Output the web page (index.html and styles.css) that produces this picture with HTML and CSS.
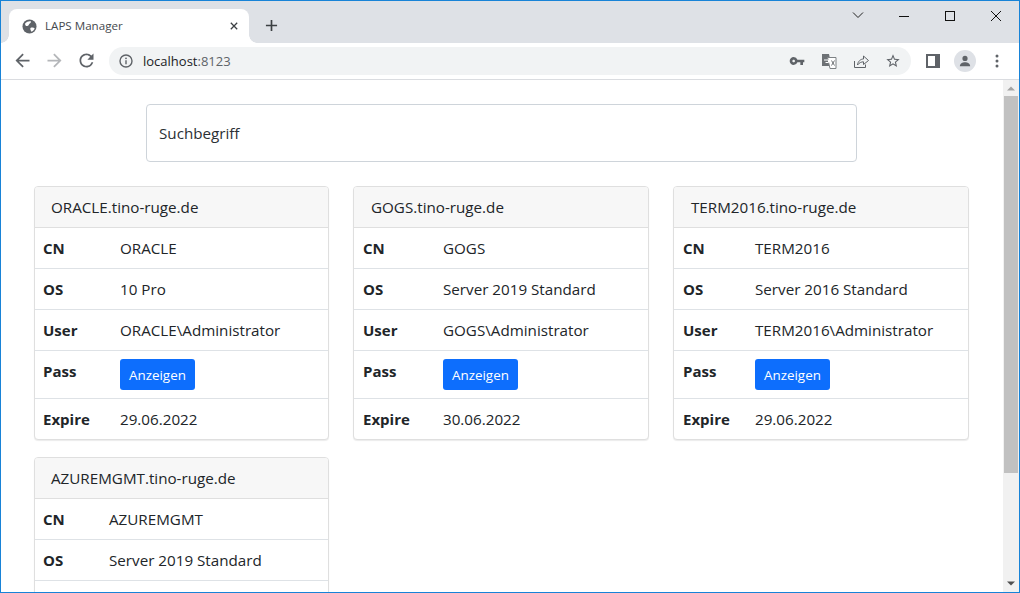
FILE: index.html
```html
<!DOCTYPE html>
<html lang="en">
<head>
  <meta charset="UTF-8" />
  <meta name="viewport" content="width=device-width, initial-scale=1.0" />
  <title>LAPS Manager</title>
  <link rel="stylesheet" href="styles.css">
</head>
<body>
  <div class="window">
    <div class="tabstrip">
      <div class="tab">
        <svg class="favicon" viewBox="0 0 16 16"><circle cx="8" cy="8" r="7.500" fill="#5f6368"/><path d="M3.500 4.500C5 2.800 7.500 2 9.500 2.500 9.800 4 8.500 5 7.500 5.500 7 7 6 7.500 4.500 7.500 3.500 7 3 5.500 3.500 4.500Z M9 9.500C10.500 8.800 12.500 9 13.500 9.800 13 11.500 11.500 13 10 13.500 9.500 12 8.500 11 9 9.500Z" fill="#fff"/></svg>
        <span class="tab-title">LAPS Manager</span>
        <svg class="tab-close" viewBox="0 0 10 10"><path d="M1 1 9 9M9 1 1 9" stroke="#3c4043" stroke-width="1.600"/></svg>
      </div>
      <svg class="new-tab" viewBox="0 0 14 14"><path d="M7 1v12M1 7h12" stroke="#3c4043" stroke-width="1.800"/></svg>
      <div class="window-controls">
        <svg class="win-btn" viewBox="0 0 46 30"><path d="M18 11.500 23 16.500 28 11.500" fill="none" stroke="#222" stroke-width="1"/></svg>
        <svg class="win-btn" viewBox="0 0 46 30"><path d="M18 15.500h10" stroke="#111" stroke-width="1"/></svg>
        <svg class="win-btn" viewBox="0 0 46 30"><rect x="18.500" y="10.500" width="9" height="9" fill="none" stroke="#111" stroke-width="1"/></svg>
        <svg class="win-btn" viewBox="0 0 46 30"><path d="M18 10 28 20M28 10 18 20" stroke="#111" stroke-width="1"/></svg>
      </div>
    </div>

    <div class="toolbar">
      <svg class="nav-icon" viewBox="0 0 24 24"><path fill="#5f6368" d="M20 11H7.830l5.590-5.590L12 4l-8 8 8 8 1.410-1.410L7.830 13H20v-2z"/></svg>
      <svg class="nav-icon" viewBox="0 0 24 24"><path fill="#b4b6b9" d="M4 11h12.170l-5.590-5.590L12 4l8 8-8 8-1.410-1.410L16.170 13H4v-2z"/></svg>
      <svg class="nav-icon" viewBox="0 0 24 24"><path fill="#5f6368" d="M17.650 6.350A7.958 7.958 0 0 0 12 4c-4.420 0-7.990 3.580-7.990 8s3.570 8 7.990 8c3.730 0 6.840-2.550 7.730-6h-2.080A5.990 5.990 0 0 1 12 18c-3.310 0-6-2.690-6-6s2.690-6 6-6c1.660 0 3.140.69 4.220 1.780L13 11h7V4l-2.350 2.350z"/></svg>
      <div class="omnibox">
        <svg class="info-icon" viewBox="0 0 14 14"><circle cx="7" cy="7" r="6" fill="none" stroke="#5f6368" stroke-width="1.400"/><path d="M7 6.200v4" stroke="#5f6368" stroke-width="1.400"/><circle cx="7" cy="4.300" r=".9" fill="#5f6368"/></svg>
        <span class="url">localhost<span class="url-port">:8123</span></span>
        <div class="omni-actions">
          <svg class="omni-icon" viewBox="0 0 24 24"><path fill="#5f6368" d="M12.650 10A5.990 5.990 0 0 0 7 6c-3.310 0-6 2.690-6 6s2.690 6 6 6a5.990 5.990 0 0 0 5.650-4H17v4h4v-4h2v-4H12.650zM7 14c-1.100 0-2-.9-2-2s.9-2 2-2 2 .9 2 2-.9 2-2 2z"/></svg>
          <svg class="omni-icon" viewBox="0 0 16 16"><path fill="#6d7175" d="M1 1h7l2.500 12H1z"/><path d="M6.500 4.500h8.500v11H9z" fill="#fff" stroke="#7d8184" stroke-width="1"/><path d="M3 7h4.500v2.500H4.500" fill="none" stroke="#fff" stroke-width="1"/><path d="M10.500 7.500l3 5M13.500 7.500l-3 5" stroke="#6d7175" stroke-width="1"/></svg>
          <svg class="omni-icon" viewBox="0 0 16 16"><path d="M1.500 8v6.500h11V11.500" fill="none" stroke="#5f6368" stroke-width="1"/><path d="M4.500 12C4.800 8.500 7.500 6 10.500 6V3L15.500 7.500 10.500 11.500V8.800C8.500 8.800 6 9.800 4.500 12Z" fill="#f1f3f4" stroke="#5f6368" stroke-width="1" stroke-linejoin="round"/></svg>
          <svg class="omni-icon" viewBox="0 0 24 24"><path fill="#5f6368" d="M22 9.240l-7.190-.62L12 2 9.190 8.630 2 9.240l5.460 4.730L5.820 21 12 17.270 18.180 21l-1.630-7.030L22 9.240zM12 15.400l-3.760 2.270 1-4.280-3.320-2.880 4.380-.38L12 6.100l1.710 4.040 4.380.38-3.320 2.880 1 4.280L12 15.400z"/></svg>
        </div>
      </div>
      <svg class="panel-icon" viewBox="0 0 14 14"><path fill="#5f6368" d="M0 0h14v14H0z"/><path fill="#fff" d="M2 2h7v10H2z"/></svg>
      <div class="avatar"><svg viewBox="0 0 14 14"><circle cx="7" cy="4" r="3" fill="#5f6368"/><path d="M1 13c0-3 3-4.500 6-4.500s6 1.500 6 4.500z" fill="#5f6368"/></svg></div>
      <svg class="menu-icon" viewBox="0 0 4 14"><circle cx="2" cy="2" r="1.500" fill="#5f6368"/><circle cx="2" cy="7" r="1.500" fill="#5f6368"/><circle cx="2" cy="12" r="1.500" fill="#5f6368"/></svg>
    </div>

    <div class="viewport">
      <main class="page">
        <input class="search" type="text" placeholder="Suchbegriff" />
        <div class="cards">

          <section class="card card-oracle">
            <div class="card-header">ORACLE.tino-ruge.de</div>
            <table class="info">
              <tr><th>CN</th><td>ORACLE</td></tr>
              <tr><th>OS</th><td>10 Pro</td></tr>
              <tr><th>User</th><td>ORACLE\Administrator</td></tr>
              <tr><th>Pass</th><td><button class="btn">Anzeigen</button></td></tr>
              <tr><th>Expire</th><td>29.06.2022</td></tr>
            </table>
          </section>

          <section class="card card-gogs">
            <div class="card-header">GOGS.tino-ruge.de</div>
            <table class="info">
              <tr><th>CN</th><td>GOGS</td></tr>
              <tr><th>OS</th><td>Server 2019 Standard</td></tr>
              <tr><th>User</th><td>GOGS\Administrator</td></tr>
              <tr><th>Pass</th><td><button class="btn">Anzeigen</button></td></tr>
              <tr><th>Expire</th><td>30.06.2022</td></tr>
            </table>
          </section>

          <section class="card card-term">
            <div class="card-header">TERM2016.tino-ruge.de</div>
            <table class="info">
              <tr><th>CN</th><td>TERM2016</td></tr>
              <tr><th>OS</th><td>Server 2016 Standard</td></tr>
              <tr><th>User</th><td>TERM2016\Administrator</td></tr>
              <tr><th>Pass</th><td><button class="btn">Anzeigen</button></td></tr>
              <tr><th>Expire</th><td>29.06.2022</td></tr>
            </table>
          </section>

          <section class="card card-azure">
            <div class="card-header">AZUREMGMT.tino-ruge.de</div>
            <table class="info">
              <tr><th>CN</th><td>AZUREMGMT</td></tr>
              <tr><th>OS</th><td>Server 2019 Standard</td></tr>
              <tr class="row-cut"><th></th><td></td></tr>
            </table>
          </section>

        </div>
      </main>
      <div class="scrollbar">
        <svg class="scroll-arrow" viewBox="0 0 16 16"><path d="M4 10.500 8 6.500 12 10.500Z" fill="#a3a3a3"/></svg>
        <div class="scroll-track"><div class="scroll-thumb"></div></div>
        <svg class="scroll-arrow" viewBox="0 0 16 16"><path d="M4 5.500 8 9.500 12 5.500Z" fill="#505050"/></svg>
      </div>
    </div>
  </div>
</body>
</html>
```

FILE: styles.css
```css
* {
  box-sizing: border-box;
}
html, body {
  margin: 0;
  padding: 0;
  height: 100%;
  overflow: hidden;
}
body {
  font-family: 'Open Sans', sans-serif;
  font-size: 15.200px;
  color: #212529;
  background: #fff;
}
svg {
  display: block;
  flex: none;
}

/* browser frame */
.window {
  height: 593px;
  display: flex;
  flex-direction: column;
  border: 1px solid #1883d7;
}
.tabstrip {
  height: 42px;
  flex: none;
  display: flex;
  align-items: flex-end;
  background: #dee1e6;
  padding-left: 8px;
}
.tab {
  position: relative;
  width: 240px;
  height: 34px;
  display: flex;
  align-items: center;
  padding: 0 11px 0 13px;
  background: #fff;
  border-radius: 8px 8px 0 0;
}
.tab::before,
.tab::after {
  content: "";
  position: absolute;
  bottom: 0;
  width: 8px;
  height: 8px;
}
.tab::before {
  left: -8px;
  background: radial-gradient(circle at 0 0, #dee1e6 7.500px, #fff 8px);
}
.tab::after {
  right: -8px;
  background: radial-gradient(circle at 100% 0, #dee1e6 7.500px, #fff 8px);
}
.favicon {
  width: 15px;
  height: 15px;
}
.tab-title {
  margin: 0 0 2px 8px;
  flex: 1;
  font-size: 11.600px;
  color: #45494e;
}
.tab-close {
  width: 8px;
  height: 8px;
}
.new-tab {
  width: 13px;
  height: 13px;
  margin: 0 0 11px 16px;
}
.window-controls {
  margin-left: auto;
  align-self: flex-start;
  display: flex;
}
.win-btn {
  width: 46px;
  height: 30px;
}

.toolbar {
  height: 37px;
  flex: none;
  display: flex;
  align-items: center;
  background: #fff;
  border-bottom: 1px solid #dadce0;
  padding: 0 17px 1px 11px;
}
.nav-icon {
  width: 21px;
  height: 21px;
  margin-right: 11px;
}
.omnibox {
  width: 802px;
  height: 28px;
  margin-left: 1px;
  display: flex;
  align-items: center;
  padding: 0 10px;
  background: #f1f3f4;
  border-radius: 14px;
}
.info-icon {
  width: 14px;
  height: 14px;
}
.url {
  margin-left: 10px;
  font-size: 13px;
  color: #202124;
}
.url-port {
  color: #5f6368;
}
.omni-actions {
  margin-left: auto;
  display: flex;
  gap: 16px;
}
.omni-icon {
  width: 16px;
  height: 16px;
}
.panel-icon {
  width: 14px;
  height: 14px;
  margin-left: 15px;
}
.avatar {
  width: 22px;
  height: 22px;
  margin-left: 14px;
  padding: 5px;
  border-radius: 50%;
  background: #dee1e6;
}
.menu-icon {
  width: 4px;
  height: 14px;
  margin-left: 19px;
}

/* page */
.viewport {
  flex: 1;
  min-height: 0;
  display: flex;
}
.page {
  flex: 1;
  min-width: 0;
  overflow: hidden;
  padding: 24px 34px 0 33px;
}
.search {
  display: block;
  width: 711px;
  height: 58px;
  margin: 0 auto 24px 112px;
  padding: 0 12px;
  font: inherit;
  color: #212529;
  border: 1px solid #ced4da;
  border-radius: 4px;
  background: #fff;
}
.search::placeholder {
  color: #2b3035;
  opacity: 1;
}
.cards {
  display: grid;
  grid-template-columns: 295px 296px 296px;
  column-gap: 24px;
  row-gap: 17px;
  align-items: start;
}
.card {
  background: #fff;
  border: 1px solid #dfdfdf;
  border-radius: 4px;
  box-shadow: 0 1px 1px rgba(0,0,0,0.08);
  overflow: hidden;
}
.card-header {
  height: 41px;
  padding: 0 16px;
  line-height: 40px;
  background: #f7f7f7;
  border-bottom: 1px solid #dfdfdf;
}
.card-gogs .card-header,
.card-term .card-header {
  padding-left: 17px;
}
.info {
  width: 100%;
  border-collapse: collapse;
}
.info th,
.info td {
  padding: 8px;
  line-height: 24px;
  text-align: left;
  vertical-align: top;
}
.info th {
  font-size: 15px;
  font-weight: 700;
}
.info tr + tr th,
.info tr + tr td {
  border-top: 1px solid #dee2e6;
}
.row-cut th {
  height: 41px;
}
.card-gogs th,
.card-term th {
  padding-left: 9px;
}
.card-oracle th { width: 77px; }
.card-gogs th { width: 81px; }
.card-term th { width: 73px; }
.card-azure th { width: 66px; }
.btn {
  display: block;
  height: 31px;
  padding: 0 9px;
  font-family: inherit;
  font-size: 13.400px;
  color: #fff;
  background: #0d6efd;
  border: none;
  border-radius: 3px;
}

.scrollbar {
  width: 16px;
  flex: none;
  display: flex;
  flex-direction: column;
  background: #f1f1f1;
}
.scroll-arrow {
  width: 16px;
  height: 16px;
}
.scroll-track {
  flex: 1;
  padding: 0 1px;
}
.scroll-thumb {
  height: 377px;
  background: #c1c1c1;
}
```
